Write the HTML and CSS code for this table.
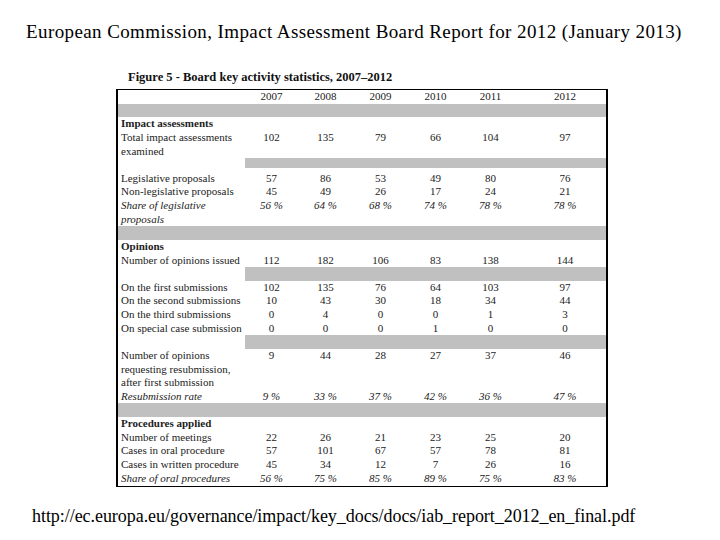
FILE: index.html
```html
<!DOCTYPE html>
<html>
<head>
<meta charset="utf-8">
<link rel="stylesheet" href="styles.css">
</head>
<body>
<div class="header">European Commission, Impact Assessment Board Report for 2012 (January 2013)</div>
<div class="figure">
  <div class="fig-title">Figure 5 - Board key activity statistics, 2007–2012</div>
  <div class="frame">
    <div class="row"><span></span><span>2007</span><span>2008</span><span>2009</span><span>2010</span><span>2011</span><span>2012</span></div>
    <div class="row band full"></div>
    <div class="row"><span class="b">Impact assessments</span></div>
    <div class="row"><span>Total impact assessments</span><span>102</span><span>135</span><span>79</span><span>66</span><span>104</span><span>97</span></div>
    <div class="row"><span>examined</span></div>
    <div class="row band part short"><i class="fill"></i></div>
    <div class="row"><span>Legislative proposals</span><span>57</span><span>86</span><span>53</span><span>49</span><span>80</span><span>76</span></div>
    <div class="row"><span>Non-legislative proposals</span><span>45</span><span>49</span><span>26</span><span>17</span><span>24</span><span>21</span></div>
    <div class="row it"><span>Share of legislative</span><span>56 %</span><span>64 %</span><span>68 %</span><span>74 %</span><span>78 %</span><span>78 %</span></div>
    <div class="row it"><span>proposals</span></div>
    <div class="row band full"></div>
    <div class="row"><span class="b">Opinions</span></div>
    <div class="row"><span>Number of opinions issued</span><span>112</span><span>182</span><span>106</span><span>83</span><span>138</span><span>144</span></div>
    <div class="row band part"><i class="fill"></i></div>
    <div class="row"><span>On the first submissions</span><span>102</span><span>135</span><span>76</span><span>64</span><span>103</span><span>97</span></div>
    <div class="row"><span>On the second submissions</span><span>10</span><span>43</span><span>30</span><span>18</span><span>34</span><span>44</span></div>
    <div class="row"><span>On the third submissions</span><span>0</span><span>4</span><span>0</span><span>0</span><span>1</span><span>3</span></div>
    <div class="row"><span>On special case submission</span><span>0</span><span>0</span><span>0</span><span>1</span><span>0</span><span>0</span></div>
    <div class="row band part"><i class="fill"></i></div>
    <div class="row"><span>Number of opinions</span><span>9</span><span>44</span><span>28</span><span>27</span><span>37</span><span>46</span></div>
    <div class="row"><span>requesting resubmission,</span></div>
    <div class="row"><span>after first submission</span></div>
    <div class="row it"><span>Resubmission rate</span><span>9 %</span><span>33 %</span><span>37 %</span><span>42 %</span><span>36 %</span><span>47 %</span></div>
    <div class="row band full"></div>
    <div class="row"><span class="b">Procedures applied</span></div>
    <div class="row"><span>Number of meetings</span><span>22</span><span>26</span><span>21</span><span>23</span><span>25</span><span>20</span></div>
    <div class="row"><span>Cases in oral procedure</span><span>57</span><span>101</span><span>67</span><span>57</span><span>78</span><span>81</span></div>
    <div class="row"><span>Cases in written procedure</span><span>45</span><span>34</span><span>12</span><span>7</span><span>26</span><span>16</span></div>
    <div class="row it"><span>Share of oral procedures</span><span>56 %</span><span>75 %</span><span>85 %</span><span>89 %</span><span>75 %</span><span>83 %</span></div>
  </div>
</div>
<div class="footer">http://ec.europa.eu/governance/impact/key_docs/docs/iab_report_2012_en_final.pdf</div>
</body>
</html>
```
FILE: styles.css
```css
html, body {
  margin: 0;
  padding: 0;
  background: #ffffff;
}
body {
  font-family: "Liberation Serif", "Times New Roman", serif;
  color: #000;
  width: 720px;
  height: 540px;
  overflow: hidden;
}
.header {
  padding-top: 22px;
  font-size: 19px;
  letter-spacing: 0.4px;
  line-height: 20px;
  height: 20px;
  padding-left: 26px;
  white-space: nowrap;
}
.figure {
  margin-left: 116px;
  margin-top: 28px;
  width: 492px;
}
.fig-title {
  font-weight: bold;
  font-size: 12.5px;
  line-height: 14px;
  height: 14px;
  padding-left: 12px;
  color: #111;
  white-space: nowrap;
}
.frame {
  margin-top: 5px;
  border-top: 1px solid #000;
  border-bottom: 1px solid #000;
  border-left: 2px solid #000;
  border-right: 2px solid #000;
  padding-bottom: 1px;
  color: #222;
  font-size: 11px;
}
.row {
  display: grid;
  grid-template-columns: 127px 53px 55px 55px 55px 55px 1fr;
  height: 13.64px;
  line-height: 13.64px;
  white-space: nowrap;
}
.row span {
  text-align: center;
}
.row span:first-child {
  text-align: left;
  padding-left: 3px;
}
.row span:nth-child(7) {
  padding-left: 6px;
}
.row .b {
  font-weight: bold;
}
.it {
  font-style: italic;
}
.band.full {
  background: #c0c0c0;
}
.band.part .fill {
  grid-column: 2 / -1;
  background: #c0c0c0;
}
.band.short .fill {
  height: 10px;
}
.footer {
  margin-top: 19px;
  padding-left: 32px;
  font-size: 18px;
  letter-spacing: -0.05px;
  line-height: 20px;
  white-space: nowrap;
}
```
